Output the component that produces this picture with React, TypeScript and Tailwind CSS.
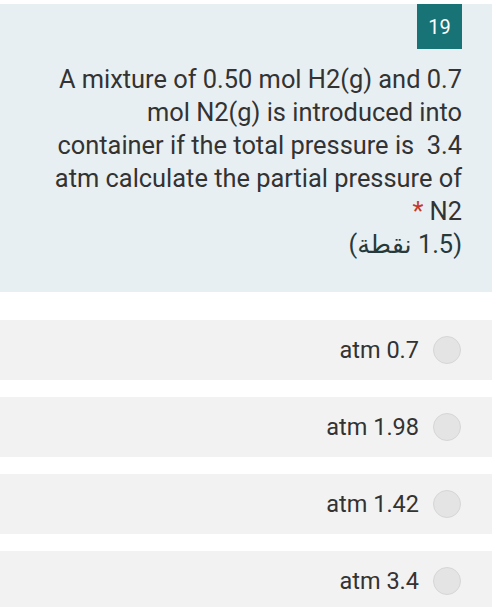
import React from 'react';

const options = ['atm 0.7', 'atm 1.98', 'atm 1.42', 'atm 3.4'];

const lines = [
  'A mixture of 0.50 mol H2(g) and 0.7',
  'mol N2(g) is introduced into',
  'container if the total pressure is  3.4',
  'atm calculate the partial pressure of',
];

export default function App() {
  return (
    <div
      className="w-[496px] h-[607px] bg-white pt-[4px] overflow-hidden"
      style={{ fontFamily: 'Roboto, "Noto Sans", sans-serif' }}
    >
      {/* Question card */}
      <div className="w-[492px] h-[288px] bg-[#e8eff2] pr-[30px] flex flex-col items-end">
        <div className="w-[45px] h-[45px] bg-[#177375] text-white text-[20px] flex items-center justify-center">
          19
        </div>
        <div className="mt-[14px] text-right text-[25.4px] leading-[33px] text-[#333333] whitespace-pre">
          {lines.map((l) => (
            <div key={l}>{l}</div>
          ))}
          <div>
            <span className="text-[#c53929]">*</span> N2
          </div>
          <div dir="rtl" className="text-[#263a3c]" style={{ fontFamily: 'Roboto, "Noto Sans", "DejaVu Sans", sans-serif' }}>
            (1.5 نقطة)
          </div>
        </div>
      </div>

      {/* Choices */}
      <div className="mt-[28px] flex flex-col gap-[17px]">
        {options.map((o) => (
          <div
            key={o}
            className="w-[492px] h-[60px] bg-[#f2f2f2] flex items-center justify-end pr-[31px] gap-[14px]"
          >
            <span className="text-[23.5px] text-[#333333] pt-[2px]">{o}</span>
            <span className="w-[28px] h-[28px] rounded-full bg-[#e4e4e4] border border-[#d6d6d6]" />
          </div>
        ))}
      </div>
    </div>
  );
}
